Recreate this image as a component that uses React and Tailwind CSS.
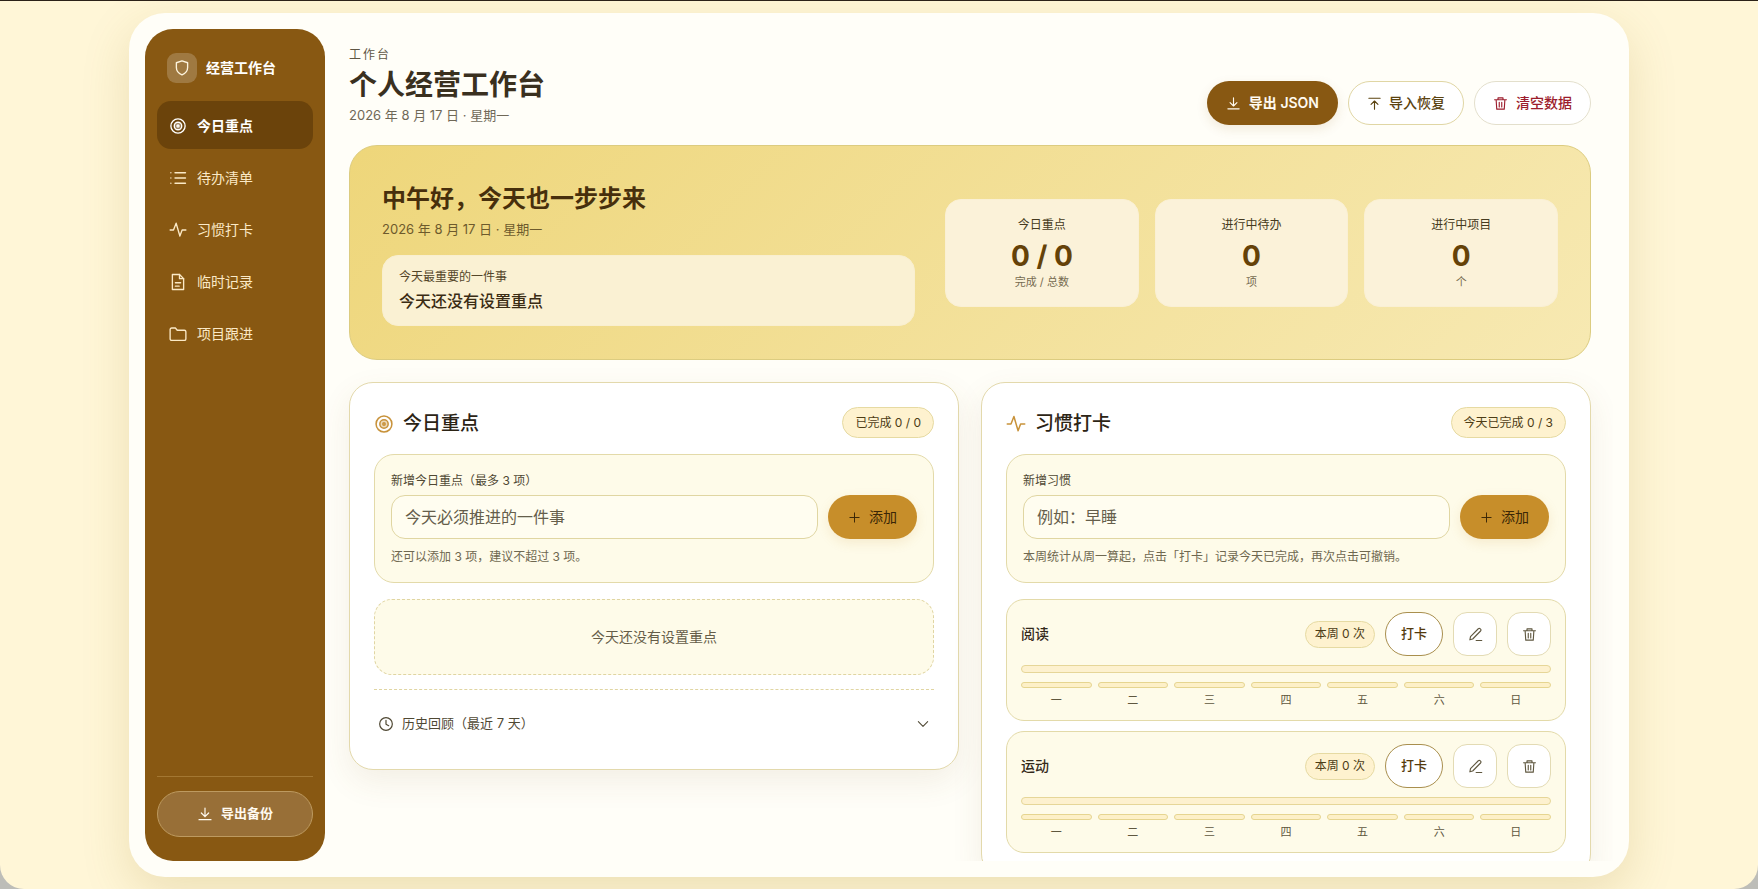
import React from "react";

const ICONS = {
  shield: <path d="M12 2.500 19.500 5v6.200c0 4.600-3 8-7.500 10-4.500-2-7.500-5.400-7.500-10V5z" />,
  target: (
    <>
      <circle cx="12" cy="12" r="9.5" />
      <circle cx="12" cy="12" r="5" fill="currentColor" fillOpacity="0.35" />
      <circle cx="12" cy="12" r="1.4" />
    </>
  ),
  list: <path d="M8 5h14M8 12h14M8 19h14M2.500 5h.01M2.500 12h.01M2.500 19h.01" />,
  pulse: <path d="M1.500 12h4.500L9.500 3l5 17 3-8h5" />,
  file: (
    <>
      <path d="M4.500 2h9.500l5.500 5.500V22h-15z" />
      <path d="M14 2v5.500h5.500M8.500 13h7M8.500 17.500h5" />
    </>
  ),
  folder: <path d="M1.500 6a2 2 0 0 1 2-2h5l2.500 3h9.500a2 2 0 0 1 2 2v9.500a2 2 0 0 1-2 2h-17a2 2 0 0 1-2-2z" />,
  download: <path d="M12 3v13M6.500 10.500 12 16l5.500-5.500M3 20.500h18" />,
  upload: <path d="M12 21V8M6.500 13.500 12 8l5.500 5.500M3 3.500h18" />,
  trash: <path d="M2.500 6h19M8 6V3h8v3M5 6l1 15h12l1-15M10 10v7.500M14 10v7.500" />,
  edit: <path d="M13 21.500h9M3 20.500l1-5L16.500 2.800a2 2 0 0 1 3 0l.6.6a2 2 0 0 1 0 3L7.500 19.200z" />,
  plus: <path d="M12 3.500v17M3.500 12h17" />,
  clock: (
    <>
      <circle cx="12" cy="12" r="9.5" />
      <path d="M12 6.500v6l4 2" />
    </>
  ),
  chevron: <path d="m4 8 8 8 8-8" />,
};

const Icon = ({ name, className = "size-[15px]" }) => (
  <svg
    viewBox="0 0 24 24"
    fill="none"
    stroke="currentColor"
    strokeWidth="1.8"
    strokeLinecap="round"
    strokeLinejoin="round"
    aria-hidden="true"
    className={`shrink-0 ${className}`}
  >
    {ICONS[name]}
  </svg>
);

const NAV = [
  { label: "今日重点", icon: "target", active: true },
  { label: "待办清单", icon: "list" },
  { label: "习惯打卡", icon: "pulse" },
  { label: "临时记录", icon: "file" },
  { label: "项目跟进", icon: "folder" },
];

const STATS = [
  { label: "今日重点", value: "0 / 0", unit: "完成 / 总数" },
  { label: "进行中待办", value: "0", unit: "项" },
  { label: "进行中项目", value: "0", unit: "个" },
];

const HABITS = ["阅读", "运动"];
const WEEK = ["一", "二", "三", "四", "五", "六", "日"];
const TODAY = "2026 年 8 月 17 日 · 星期一";

const Sidebar = () => (
  <aside className="flex w-[180px] shrink-0 flex-col rounded-[28px] bg-[#885812] px-3 pt-6 pb-6 text-[#fdf3dc]">
    <div className="flex items-center gap-[9px] px-[10px]">
      <span className="flex size-[30px] items-center justify-center rounded-[9px] bg-white/20">
        <Icon name="shield" className="size-[18px]" />
      </span>
      <span className="text-sm font-semibold text-white">经营工作台</span>
    </div>

    <nav className="mt-[18px] flex flex-col gap-1">
      {NAV.map((item) => (
        <a
          key={item.label}
          href="#"
          aria-current={item.active ? "page" : undefined}
          className={`flex h-12 items-center gap-[10px] rounded-[14px] px-3 pt-px text-sm ${
            item.active ? "bg-[#6b430b] font-semibold text-white" : "text-[#fbe9c6]"
          }`}
        >
          <Icon name={item.icon} className="size-[18px]" />
          {item.label}
        </a>
      ))}
    </nav>

    <div className="mt-auto border-t border-[#a37732] pt-[14px]">
      <button
        type="button"
        className="flex h-[46px] w-full items-center justify-center gap-2 rounded-full border border-[#bd9a60] bg-[#986f37] text-[13px] font-semibold text-[#fffaf0]"
      >
        <Icon name="download" className="size-4" />
        导出备份
      </button>
    </div>
  </aside>
);

const Header = () => (
  <header className="flex flex-wrap items-end justify-between gap-4">
    <div>
      <p className="text-xs leading-[18px] tracking-[2px] text-[#5e5644]">工作台</p>
      <h1 className="mt-px text-[28px] leading-10 font-semibold text-[#3a301f]">个人经营工作台</h1>
      <p className="text-[13px] leading-5 text-[#6f6857]">{TODAY}</p>
    </div>
    <div className="flex gap-[10px]">
      <button
        type="button"
        className="flex h-11 items-center gap-2 rounded-full bg-[#885812] px-[19px] text-sm font-semibold text-[#fffaf0] shadow-[0_4px_12px_rgba(136,88,18,0.12)]"
      >
        <Icon name="download" />
        导出 JSON
      </button>
      <button
        type="button"
        className="flex h-11 items-center gap-[7px] rounded-full border border-[#e0d6a4] bg-white px-[18px] text-sm font-medium text-[#5b430f]"
      >
        <Icon name="upload" />
        导入恢复
      </button>
      <button
        type="button"
        className="flex h-11 items-center gap-2 rounded-full border border-[#e3dfcc] bg-white px-[18px] text-sm font-medium text-[#9c1c2c]"
      >
        <Icon name="trash" />
        清空数据
      </button>
    </div>
  </header>
);

const Hero = () => (
  <section className="mt-5 grid grid-cols-[1fr_1.15fr] items-center gap-[30px] rounded-[28px] border border-[#dccc80] bg-linear-135 from-[#eed67a] to-[#f7e9b2] px-8 py-[33px]">
    <div>
      <h2 className="text-2xl leading-10 font-semibold text-[#472f0c]">中午好，今天也一步步来</h2>
      <p className="text-[13px] leading-5 text-[#6d5a2c]">{TODAY}</p>
      <div className="mt-4 rounded-2xl border border-[#f9efcf] bg-[#faf1d3] px-4 py-3">
        <p className="text-xs leading-[18px] text-[#54462a]">今天最重要的一件事</p>
        <p className="mt-[3px] text-base leading-6 font-medium text-[#3a2c14]">今天还没有设置重点</p>
      </div>
    </div>
    <div className="grid grid-cols-3 gap-4">
      {STATS.map((stat) => (
        <div
          key={stat.label}
          className="rounded-2xl border border-[#faf0d4] bg-[#fbf2d9] py-4 text-center"
        >
          <p className="text-xs leading-[18px] text-[#453a20]">{stat.label}</p>
          <p className="mt-1 text-[28px] leading-9 font-bold text-[#654208]">{stat.value}</p>
          <p className="text-[11px] leading-4 text-[#766b50]">{stat.unit}</p>
        </div>
      ))}
    </div>
  </section>
);

const Panel = ({ icon, title, badge, children }) => (
  <section className="rounded-3xl border border-[#e3d9ac] bg-white p-6 shadow-[0_12px_32px_rgba(120,90,40,0.09)]">
    <div className="flex items-center justify-between">
      <h2 className="flex items-center gap-[9px] pt-[3px] text-[19px] leading-7 font-medium text-[#2c2415]">
        <Icon name={icon} className="size-5 text-[#c8923a]" />
        {title}
      </h2>
      <span className="flex h-[31px] items-center rounded-full border border-[#e6daa2] bg-[#fef2cf] px-3 text-xs text-[#4d3d16]">
        {badge}
      </span>
    </div>
    {children}
  </section>
);

const AddForm = ({ id, label, placeholder, hint }) => (
  <form
    onSubmit={(e) => e.preventDefault()}
    className="mt-4 rounded-[20px] border border-[#e3daa9] bg-[#fefbe9] px-4 pt-4 pb-[15px]"
  >
    <label htmlFor={id} className="block text-xs leading-5 text-[#4f4833]">
      {label}
    </label>
    <div className="mt-1 flex gap-[10px]">
      <input
        id={id}
        type="text"
        placeholder={placeholder}
        className="h-11 min-w-0 flex-1 rounded-[14px] border border-[#e0d6a2] bg-[#fffdf0] px-[13px] text-base text-[#33291a] placeholder:text-[#655e4b]"
      />
      <button
        type="submit"
        className="flex h-11 items-center gap-2 rounded-full bg-[#c78e2a] px-5 text-sm text-[#3a2606] shadow-[0_4px_12px_rgba(199,142,42,0.14)]"
      >
        <Icon name="plus" className="size-[13px]" />
        添加
      </button>
    </div>
    <p className="mt-2 text-xs leading-5 text-[#6f6850]">{hint}</p>
  </form>
);

const HabitCard = ({ name }) => (
  <li className="rounded-[18px] border border-[#e3daa9] bg-[#fefbe9] px-[14px] pt-3 pb-[11px]">
    <div className="flex items-center gap-[10px]">
      <h3 className="mr-auto text-sm font-medium text-[#33291a]">{name}</h3>
      <span className="flex h-[27px] items-center rounded-full border border-[#e6daa2] bg-[#fef2cf] px-[9px] text-xs text-[#4d3d16]">
        本周 0 次
      </span>
      <button
        type="button"
        className="h-11 rounded-full border border-[#a98f4e] bg-white px-[15px] text-[13px] font-medium text-[#543a0c]"
      >
        打卡
      </button>
      <button
        type="button"
        aria-label={`编辑${name}`}
        className="flex size-11 items-center justify-center rounded-[14px] border border-[#e3dbb4] bg-white text-[#5f573f]"
      >
        <Icon name="edit" />
      </button>
      <button
        type="button"
        aria-label={`删除${name}`}
        className="flex size-11 items-center justify-center rounded-[14px] border border-[#e3dbb4] bg-white text-[#5f573f]"
      >
        <Icon name="trash" />
      </button>
    </div>
    <div className="mt-[9px] h-2 rounded-full border border-[#e6d698] bg-[#fdf1cf]" />
    <div className="mt-[9px] grid grid-cols-7 gap-[6px]">
      {WEEK.map((day) => (
        <div key={day} className="text-center text-[11px] leading-[18px] text-[#5f573f]">
          <div className="mb-[3px] h-[6px] rounded-full border border-[#e6d590] bg-[#fdf0c8]" />
          {day}
        </div>
      ))}
    </div>
  </li>
);

export default function App() {
  return (
    <div className="h-screen bg-[#bdbdb8] font-['Inter','Noto_Sans_CJK_SC',sans-serif]">
      <div className="flex h-full justify-center overflow-hidden rounded-b-[24px] border-t border-[#2b2118] bg-[#fff6d7] py-3">
        <div className="flex w-full max-w-[1500px] rounded-[36px] bg-[#fffef8] p-4 shadow-[0_16px_48px_rgba(140,115,10,0.17)]">
          <Sidebar />
          <main className="min-w-0 flex-1 overflow-hidden pt-[17px] pr-[22px] pl-6">
            <Header />
            <Hero />
            <div className="mt-[22px] grid grid-cols-2 items-start gap-[22px]">
              <Panel icon="target" title="今日重点" badge="已完成 0 / 0">
                <AddForm
                  id="focus"
                  label="新增今日重点（最多 3 项）"
                  placeholder="今天必须推进的一件事"
                  hint="还可以添加 3 项，建议不超过 3 项。"
                />
                <div className="mt-4 flex h-[76px] items-center justify-center rounded-[18px] border border-dashed border-[#e0d5a2] bg-[#fefbe9] text-sm text-[#655d48]">
                  今天还没有设置重点
                </div>
                <div className="mt-[14px] border-t border-dashed border-[#e0d5a2] pt-[13px]">
                  <button
                    type="button"
                    aria-expanded="false"
                    className="flex h-[42px] w-full items-center gap-2 px-1 text-[13px] text-[#4f4833]"
                  >
                    <Icon name="clock" className="size-4" />
                    历史回顾（最近 7 天）
                    <Icon name="chevron" className="ml-auto size-[14px]" />
                  </button>
                </div>
              </Panel>

              <Panel icon="pulse" title="习惯打卡" badge="今天已完成 0 / 3">
                <AddForm
                  id="habit"
                  label="新增习惯"
                  placeholder="例如：早睡"
                  hint="本周统计从周一算起，点击「打卡」记录今天已完成，再次点击可撤销。"
                />
                <ul className="mt-4 flex flex-col gap-[10px]">
                  {HABITS.map((name) => (
                    <HabitCard key={name} name={name} />
                  ))}
                </ul>
              </Panel>
            </div>
          </main>
        </div>
      </div>
    </div>
  );
}
